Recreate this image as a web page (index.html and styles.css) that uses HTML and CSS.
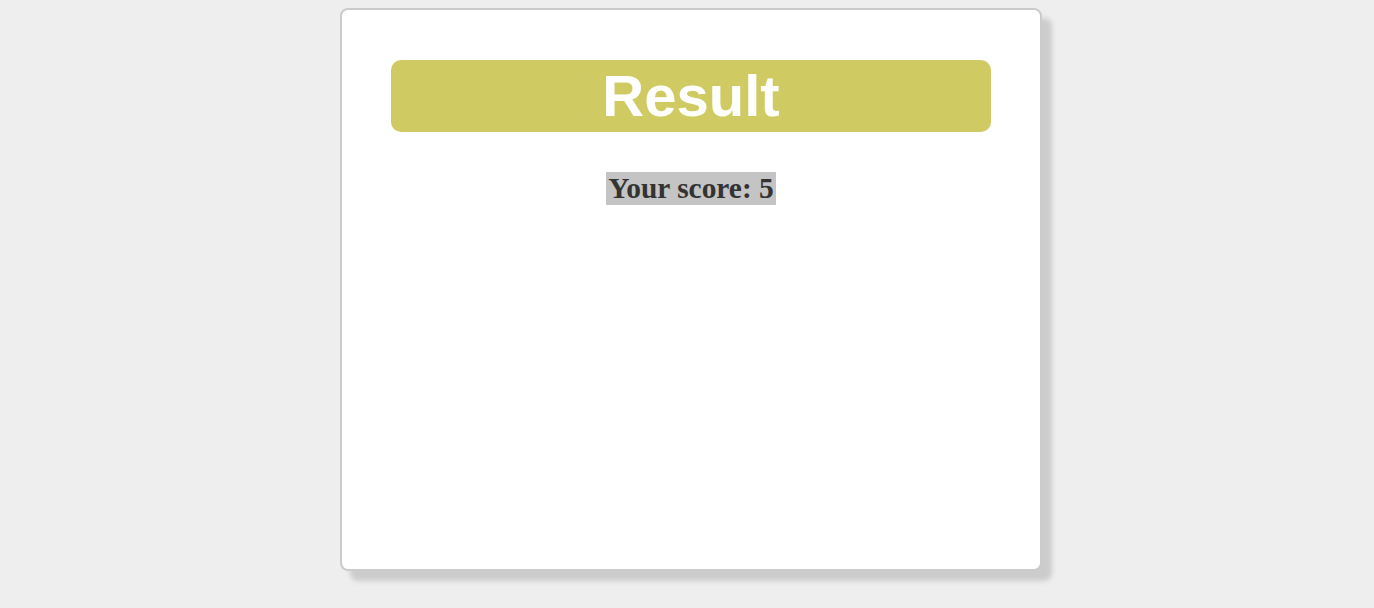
FILE: index.html
```html
<!DOCTYPE html>
<html>
<head>
<meta charset="utf-8">
<link rel="stylesheet" href="styles.css">
</head>
<body>
<div class="page">
  <div class="card">
    <div class="banner">Result</div>
    <div class="score-row"><span class="score">Your score: 5</span></div>
  </div>
</div>
</body>
</html>
```
FILE: styles.css
```css
html, body {
  margin: 0;
  padding: 0;
  background: #eeeeee;
}
.page {
  box-sizing: border-box;
  min-height: 100vh;
  display: flex;
  justify-content: center;
  align-items: flex-start;
  padding: 8px 0 30px 8px;
}
.card {
  box-sizing: border-box;
  width: 702px;
  height: 563px;
  flex: none;
  background: #ffffff;
  border: 2px solid #cbcbcb;
  border-radius: 8px;
  box-shadow: 10px 10px 5px #cccccc;
  padding: 50px 49px;
}
.banner {
  height: 72px;
  background: #cfcb62;
  border-radius: 10px;
  color: #ffffff;
  font-family: "Liberation Sans", Arial, sans-serif;
  font-weight: bold;
  font-size: 58px;
  line-height: 72px;
  text-align: center;
}
.score-row {
  text-align: center;
  margin-top: 40px;
}
.score {
  background: #c4c4c4;
  color: #333333;
  font-family: "Liberation Serif", "Times New Roman", serif;
  font-weight: bold;
  font-size: 29.4px;
  line-height: 33px;
  display: inline-block;
  padding: 0 2px;
}
```
